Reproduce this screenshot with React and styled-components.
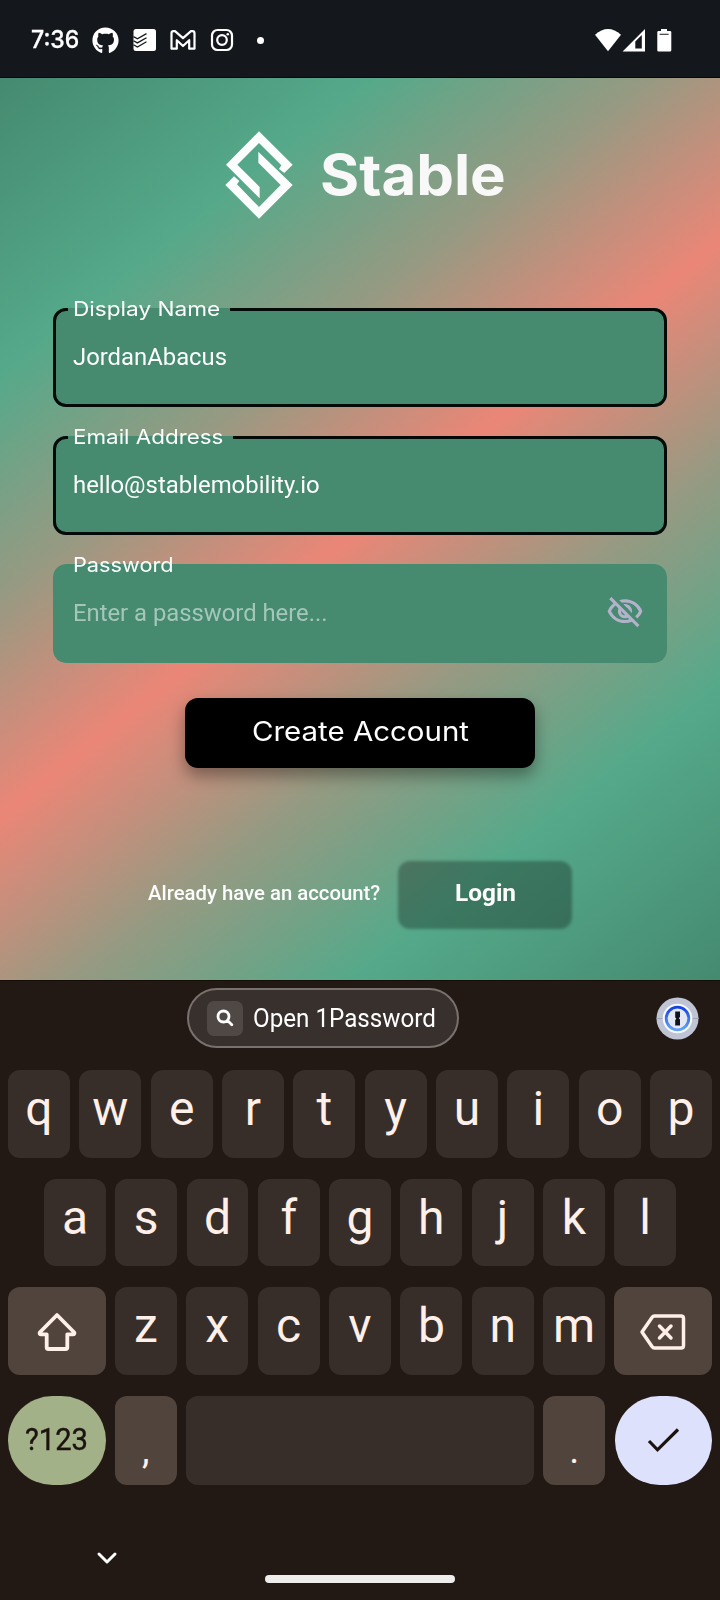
import React, { useLayoutEffect, useRef, useState } from 'react';
import styled, { createGlobalStyle } from 'styled-components';
import { FaGithub } from 'react-icons/fa';
import { MdOutlineVisibilityOff } from 'react-icons/md';

const GlobalStyle = createGlobalStyle`
  *, *::before, *::after { box-sizing: border-box; }
  html, body { margin: 0; padding: 0; background: #221914; }
  button { border: 0; margin: 0; padding: 0; font: inherit; color: inherit; background: none; }
  svg { display: block; flex: none; }
`;

const geometric = `Inter, Roboto, "Liberation Sans", sans-serif`;
const grotesk = `Roboto, "Liberation Sans", sans-serif`;

/* Text stretched or narrowed to a given width */
const FitBox = styled.span`
  display: inline-block;
  width: ${(p) => p.$width}px;
  text-align: left;
  white-space: nowrap;
`;
const FitInner = styled.span`
  display: inline-block;
  transform-origin: 0 50%;
`;
function Fit({ width, children }) {
  const ref = useRef(null);
  const [scale, setScale] = useState(1);
  useLayoutEffect(() => {
    if (ref.current.offsetWidth) setScale(width / ref.current.offsetWidth);
  }, [width, children]);
  return (
    <FitBox $width={width}>
      <FitInner ref={ref} style={{ transform: `scaleX(${scale})` }}>{children}</FitInner>
    </FitBox>
  );
}

const Screen = styled.div`
  display: flex;
  flex-direction: column;
  width: 720px;
  height: 1600px;
  overflow: hidden;
`;

/* ---------- status bar ---------- */
const StatusBar = styled.header`
  display: flex;
  justify-content: space-between;
  align-items: center;
  height: 78px;
  padding: 3px 48px 0 31px;
  background: #14181c;
  border-bottom: 1px solid #06090a;
  color: #fff;
`;
const StatusGroup = styled.div`
  display: flex;
  align-items: center;
`;
const Clock = styled.time`
  font: 500 24px/30px ${geometric};
  -webkit-text-stroke: 0.3px #fff;
  margin-right: 13px;
`;
const NoticeIcons = styled.div`
  display: flex;
  align-items: center;
  gap: 13.600px;
`;
const MoreDot = styled.i`
  width: 7px;
  height: 7px;
  margin-left: 10px;
  border-radius: 50%;
  background: #fff;
`;

const Todoist = () => (
  <svg width="24" height="24" viewBox="0 0 24 24">
    <rect x="0.5" y="1" width="22.5" height="22" rx="2.5" fill="#fff" />
    <g fill="none" stroke="#14181c" strokeWidth="1.3">
      <path d="M.5 8.600 4.400 10.800 13.500 5.600" />
      <path d="M.5 12.700 4.400 14.900 13.500 9.700" />
      <path d="M.5 16.800 4.400 19 13.500 13.800" />
    </g>
  </svg>
);
const Gmail = () => (
  <svg width="26" height="24" viewBox="0 0 26 24" fill="none" stroke="#fff" strokeWidth="2.2" strokeLinejoin="round">
    <path d="M1.500 5.200Q1.500 3.200 3.500 3.200H5L13 10.200 21 3.200H22.500Q24.500 3.200 24.500 5.200V20.700H19.200V12.200L13 18 6.800 12.200V20.700H1.500Z" />
  </svg>
);
const Instagram = () => (
  <svg width="24" height="24" viewBox="0 0 24 24" fill="none" stroke="#fff" strokeWidth="2.2">
    <rect x="2" y="2" width="20" height="20" rx="5.500" />
    <circle cx="12" cy="12" r="4.800" />
    <circle cx="17.800" cy="6.300" r="1.300" fill="#fff" stroke="none" />
  </svg>
);
const SystemIcons = () => (
  <svg width="77" height="26" viewBox="0 0 77 26" fill="#fff">
    <path d="M0 7.800Q13 -4 26 7.800L13 24.200Z" />
    <path fillRule="evenodd" d="M27.600 24.600 50 2V24.600ZM40.300 14.600V21.500H46.800V8Z" />
    <path fillRule="evenodd" d="M66 2h6v2h3q1.300 0 1.300 1.300v18q0 1.300-1.300 1.300h-11.400q-1.300 0-1.300-1.300v-18q0-1.300 1.300-1.300h2.400ZM64.600 6.700v1h9v-1Z" />
  </svg>
);

/* ---------- sign-up form ---------- */
const Main = styled.main`
  display: flex;
  flex-direction: column;
  align-items: center;
  height: 902px;
  padding-top: 52px;
  background: linear-gradient(
    141.4deg,
    #458a70 0%, #55a98a 20%, #969a82 35%, #eb8677 50%,
    #969a82 65%, #55a98a 80%, #458a70 100%
  );
  color: #fcfdfc;
`;
const Brand = styled.div`
  display: flex;
  align-items: center;
  gap: 27px;
  height: 90px;
  padding-left: 10px;
`;
const BrandName = styled.h1`
  margin: 0;
  font: 700 56px/90px ${geometric};
  color: #f8f8f8;
`;
const Logo = () => (
  <svg width="68" height="90" viewBox="0 0 204 270" fill="#fcfdfd">
    <path d="M102 4 203 104 178 129 162 117 169 106 102 39 37 104 104 171V205L3 104Z" />
    <path d="M102 266 1 165 27 139 43 153 36 163 102 231 167 165 100 98V65L203 165Z" />
  </svg>
);
const Form = styled.form`
  display: flex;
  flex-direction: column;
  align-items: center;
  width: 614.600px;
  margin-top: 76.600px;
  gap: 17.600px;
`;
const Field = styled.fieldset`
  width: 100%;
  min-width: 0;
  height: 110.400px;
  margin: 0;
  padding: 0 20px 0 12.500px;
  border: 3px solid ${(p) => (p.$outlined ? '#040a08' : 'transparent')};
  border-radius: 13px;
  background: #468a70;
`;
const Legend = styled.legend`
  padding: 0 10px 0 5px;
  font: 400 20px/25px ${geometric};
`;
const FieldBody = styled.div`
  display: flex;
  align-items: center;
  justify-content: space-between;
  height: 30px;
  margin-top: 20.500px;
  padding-left: 5px;
  font: 400 24px/30px ${grotesk};
  color: ${(p) => (p.$placeholder ? '#a5c7b9' : '#fcfdfc')};
`;
const Reveal = styled.button`
  padding-bottom: 2px;
  color: #b3b2cb;
`;
const CreateButton = styled.button`
  width: 350px;
  height: 69.700px;
  margin-top: 17.400px;
  padding-bottom: 1px;
  border-radius: 13px;
  background: #000;
  box-shadow: 0 8px 16px rgba(0, 0, 0, 0.36);
  font: 400 27px/34px ${geometric};
  color: #fff;
`;
const LoginRow = styled.div`
  display: flex;
  align-items: center;
  gap: 18px;
  margin-top: 93px;
  font: 500 20.500px/26px ${grotesk};
`;
const LoginPrompt = styled.span`
  padding-bottom: 4px;
`;
const LoginButton = styled.button`
  position: relative;
  isolation: isolate;
  width: 174px;
  height: 68px;
  padding-bottom: 4px;
  font: 700 24px/30px ${grotesk};
  &::before {
    content: '';
    position: absolute;
    z-index: -1;
    inset: 0;
    border-radius: 12px;
    background: rgba(0, 0, 0, 0.29);
    filter: blur(1.800px);
  }
`;

/* ---------- keyboard ---------- */
const Keyboard = styled.section`
  display: flex;
  flex-direction: column;
  height: 620px;
  background: #221914;
  border-top: 1px solid #160d09;
  color: #feefe8;
`;
const Suggestions = styled.div`
  display: flex;
  align-items: center;
  justify-content: space-between;
  height: 60px;
  margin-top: 7px;
  padding: 0 21px 0 187px;
`;
const Chip = styled.button`
  display: flex;
  align-items: center;
  gap: 10px;
  width: 272px;
  height: 60px;
  padding-left: 18px;
  border: 2px solid #79716e;
  border-radius: 30px;
  background: #38302c;
  font: 400 25px/30px ${grotesk};
  color: #fff;
`;
const ChipIcon = styled.span`
  display: grid;
  place-items: center;
  width: 36px;
  height: 35px;
  border-radius: 7px;
  background: #504845;
`;
const ChipLabel = styled.span`
  padding-top: 2px;
`;
const Rows = styled.div`
  display: flex;
  flex-direction: column;
  gap: 20.700px;
  margin-top: 22.400px;
  padding: 0 8px;
`;
const Row = styled.div`
  display: flex;
  gap: 9.330px;
  height: ${(p) => p.$height || 87.7}px;
  padding: 0 ${(p) => p.$inset || 0}px;
`;
const Key = styled.button`
  display: flex;
  align-items: center;
  justify-content: center;
  flex: 1 1 0;
  min-width: 0;
  padding-bottom: 10px;
  border-radius: 12px;
  background: #372e2a;
  font: 400 48px/56px ${grotesk};
`;
const SideKey = styled(Key)`
  flex: 0 0 97.500px;
  padding: 2px 0 0;
  background: #51443c;
`;
const PillKey = styled(SideKey)`
  border-radius: 45px;
  padding: 0;
  background: ${(p) => p.$fill};
  font: 400 31.500px/40px ${grotesk};
  -webkit-text-stroke: 0.4px #1c130e;
  color: #1c130e;
`;
const PunctuationKey = styled(Key)`
  flex: 0 0 62px;
  padding: 20px 0 0;
  background: #51443c;
  font-size: 38px;
`;
const NavBar = styled.nav`
  display: grid;
  grid-template-columns: 1fr 190px 1fr;
  margin-top: 64px;
`;
const Handle = styled.div`
  height: 8px;
  margin-top: 26px;
  border-radius: 4px;
  background: #eeedeb;
`;
const Dismiss = styled.button`
  justify-self: start;
  align-self: start;
  margin-left: 95.500px;
  color: #fff;
`;

const Line = ({ w, h, d, stroke = 'currentColor', width = 3.5, round = true }) => (
  <svg width={w} height={h} viewBox={`0 0 ${w} ${h}`} fill="none" stroke={stroke} strokeWidth={width}
    strokeLinecap={round ? 'round' : 'butt'} strokeLinejoin={round ? 'round' : 'miter'}>
    <path d={d} />
  </svg>
);

const OnePassword = () => (
  <svg width="43" height="43" viewBox="0 0 43 43">
    <defs>
      <linearGradient id="ring" x1="0" y1="0" x2="0" y2="1">
        <stop offset="0" stopColor="#1543e0" />
        <stop offset="1" stopColor="#62a4f5" />
      </linearGradient>
    </defs>
    <circle cx="21.500" cy="21.500" r="21" fill="#bfc4d5" />
    <path d="M.5 21.500H42.500" stroke="#9fa5b8" strokeWidth="1" />
    <circle cx="21.500" cy="21.500" r="14.800" fill="#f7f9fd" />
    <circle cx="21.500" cy="21.500" r="11.300" fill="#e3e8f4" stroke="url(#ring)" strokeWidth="2.800" />
    <path d="M19.200 14.500h4.800v5.600l-1.200 1.200 1.200 1.300v5.900h-4.800v-5.600l1.200-1.200-1.200-1.300Z" fill="#10121c" />
  </svg>
);

const letters = (s) => s.split('').map((c) => <Key type="button" key={c}>{c}</Key>);

export default function App() {
  return (
    <Screen>
      <GlobalStyle />
      <StatusBar>
        <StatusGroup>
          <Clock><Fit width={48}>7:36</Fit></Clock>
          <NoticeIcons>
            <FaGithub size={27} />
            <Todoist />
            <Gmail />
            <Instagram />
            <MoreDot />
          </NoticeIcons>
        </StatusGroup>
        <SystemIcons />
      </StatusBar>

      <Main>
        <Brand>
          <Logo />
          <BrandName><Fit width={186}>Stable</Fit></BrandName>
        </Brand>
        <Form>
          <Field $outlined>
            <Legend><Fit width={147}>Display Name</Fit></Legend>
            <FieldBody><Fit width={154}>JordanAbacus</Fit></FieldBody>
          </Field>
          <Field $outlined>
            <Legend><Fit width={150}>Email Address</Fit></Legend>
            <FieldBody><Fit width={247}>hello@stablemobility.io</Fit></FieldBody>
          </Field>
          <Field>
            <Legend><Fit width={101}>Password</Fit></Legend>
            <FieldBody $placeholder>
              <Fit width={255}>Enter a password here...</Fit>
              <Reveal type="button" aria-label="Show password"><MdOutlineVisibilityOff size={38} /></Reveal>
            </FieldBody>
          </Field>
          <CreateButton type="button"><Fit width={217}>Create Account</Fit></CreateButton>
        </Form>
        <LoginRow>
          <LoginPrompt><Fit width={232}>Already have an account?</Fit></LoginPrompt>
          <LoginButton type="button"><Fit width={61}>Login</Fit></LoginButton>
        </LoginRow>
      </Main>

      <Keyboard>
        <Suggestions>
          <Chip type="button">
            <ChipIcon>
              <Line w={18} h={18} width={2.8} d="M13 7.500A5.500 5.500 0 1 1 2 7.500A5.500 5.500 0 1 1 13 7.500M11.500 11.500 15.800 15.800" />
            </ChipIcon>
            <ChipLabel><Fit width={183}>Open 1Password</Fit></ChipLabel>
          </Chip>
          <OnePassword />
        </Suggestions>
        <Rows>
          <Row>{letters('qwertyuiop')}</Row>
          <Row $inset={36}>{letters('asdfghjkl')}</Row>
          <Row>
            <SideKey type="button" aria-label="Shift">
              <Line w={42} h={40} width={3.8} d="M21 3 38.300 20.500Q38.800 22.300 37 22.300H31.300V35.500Q31.300 37 29.700 37H12.300Q10.700 37 10.700 35.500V22.300H5Q3.200 22.300 3.700 20.500Z" />
            </SideKey>
            {letters('zxcvbnm')}
            <SideKey type="button" aria-label="Backspace">
              <Line w={48} h={40} d="M15.500 4H42Q44.500 4 44.500 6.500V33.500Q44.500 36 42 36H15.500Q14 36 13 34.500L3 20 13 5.500Q14 4 15.500 4ZM20.500 14 32 26M32 14 20.500 26" />
            </SideKey>
          </Row>
          <Row $height={89.5}>
            <PillKey type="button" $fill="#a2b188"><Fit width={63}>?123</Fit></PillKey>
            <PunctuationKey type="button">,</PunctuationKey>
            <Key type="button" aria-label="Space" />
            <PunctuationKey type="button">.</PunctuationKey>
            <PillKey type="button" $fill="#dde1fc" aria-label="Done">
              <Line w={36} h={28} width={3.2} round={false} d="M4 15 12.500 23.800 33 3.500" />
            </PillKey>
          </Row>
        </Rows>
        <NavBar>
          <Dismiss type="button" aria-label="Hide keyboard">
            <Line w={22} h={16} width={3} d="M3 5 11 13 19 5" />
          </Dismiss>
          <Handle />
        </NavBar>
      </Keyboard>
    </Screen>
  );
}
